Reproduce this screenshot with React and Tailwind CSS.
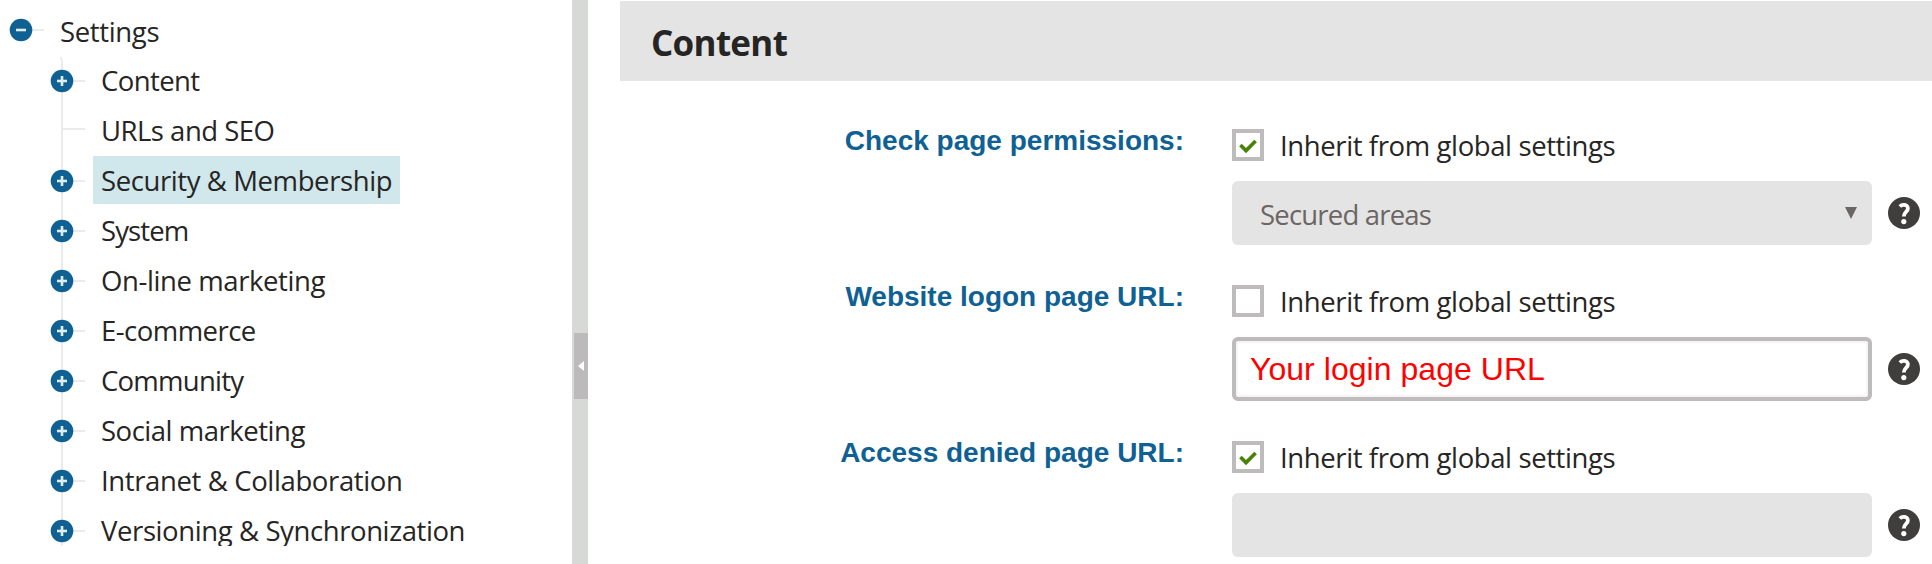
import React from "react";

const TREE = [
  { label: "Content", tracking: "tracking-[-0.6px]", first: true },
  { label: "URLs and SEO", tracking: "tracking-[-0.5px]", leaf: true },
  { label: "Security & Membership", tracking: "tracking-[-0.4px]", selected: true },
  { label: "System", tracking: "tracking-[-0.9px]" },
  { label: "On-line marketing", tracking: "tracking-[-0.4px]" },
  { label: "E-commerce", tracking: "tracking-[-0.53px]" },
  { label: "Community", tracking: "tracking-[-0.75px]" },
  { label: "Social marketing", tracking: "tracking-[-0.48px]" },
  { label: "Intranet & Collaboration", tracking: "tracking-[-0.37px]" },
  { label: "Versioning & Synchronization", tracking: "tracking-[-0.4px]" },
];

function NodeIcon({ root, first, leaf }) {
  const cy = root ? 23 : 25;
  return (
    <svg width="36" height="50" viewBox="0 0 36 50" className="block shrink-0">
      {!root && <rect x="11" y={first ? 4 : 0} width="2" height={first ? 46 : 50} fill="#ebebeb" />}
      {first && <rect x="10" y="1" width="2" height="3" fill="#ebebeb" />}
      <rect x="12" y={leaf ? 22 : cy - 1} width="23" height="2" fill="#ebebeb" />
      {!leaf && (
        <>
          <circle cx="12" cy={cy} r="11.3" fill="#0f6194" />
          <rect x="7" y={cy - 1.3} width="10" height="2.6" fill="#e0ebf2" />
          {!root && <rect x="10.7" y={cy - 5} width="2.6" height="10" fill="#e0ebf2" />}
        </>
      )}
    </svg>
  );
}

function Sidebar() {
  return (
    <nav className="w-[572px] h-[546px] shrink-0 overflow-hidden pt-[7px] text-[27.5px] leading-[50px] text-[#262524] whitespace-nowrap">
      <div className="flex h-[49px] pl-[9px]">
        <NodeIcon root />
        <span className="ml-[15px] tracking-[-0.35px]">Settings</span>
      </div>
      <ul className="pl-[50px]">
        {TREE.map((n) => (
          <li key={n.label} className="flex h-[50px]">
            <NodeIcon first={n.first} leaf={n.leaf} />
            <span className={`ml-[7px] h-12 px-2 ${n.tracking} ${n.selected ? "w-[307px] bg-[#d0e7ec]" : ""}`}>
              {n.label}
            </span>
          </li>
        ))}
      </ul>
    </nav>
  );
}

function Splitter() {
  return (
    <div className="flex w-4 shrink-0 flex-col items-end bg-[#d6d9d6] pt-[333px]">
      <div className="flex h-[66px] w-[14px] items-center bg-[#bdbabb] pl-1">
        <svg width="6" height="10" viewBox="0 0 6 10">
          <path d="M6 0V10L0 5Z" fill="#fff" />
        </svg>
      </div>
    </div>
  );
}

function HelpIcon() {
  return (
    <svg width="32" height="32" viewBox="0 0 32 32" className="ml-4 shrink-0">
      <circle cx="16" cy="16" r="16" fill="#403e3d" />
      <path
        d="M11.8 9.5C13.2 8.1 15 7.6 16.7 7.9C19.3 8.3 20.5 10.6 19.6 12.8C18.8 14.9 15.8 15.6 15.8 19.6"
        fill="none"
        stroke="#fff"
        strokeWidth="3.8"
      />
      <circle cx="15.8" cy="24.6" r="2.6" fill="#fff" />
    </svg>
  );
}

function Setting({ label, checked, children }) {
  return (
    <div className="flex h-[121px]">
      <div className="w-[596px] shrink-0 pt-px text-right font-['Liberation_Sans',sans-serif] text-[28px] leading-8 font-bold text-[#0f6194]">
        {label}
      </div>
      <div className="ml-12 pt-[5px]">
        <div className="flex h-8">
          <span className="flex size-8 items-center justify-center border-4 border-[#bdbbbb]">
            {checked && (
              <svg width="24" height="24" viewBox="0 0 24 24">
                <path d="M4.4 12L10 17.6L19.6 8" fill="none" stroke="#498205" strokeWidth="3.6" />
              </svg>
            )}
          </span>
          <span className="ml-4 text-[27.5px] leading-[34px] tracking-[-0.39px] text-[#262524]">
            Inherit from global settings
          </span>
        </div>
        <div className="mt-5 flex items-center">
          {children}
          <HelpIcon />
        </div>
      </div>
    </div>
  );
}

export default function App() {
  return (
    <div className="flex h-[564px] w-[1932px] overflow-hidden bg-white font-['Open_Sans','Noto_Sans',sans-serif]">
      <Sidebar />
      <Splitter />
      <main className="min-w-0 flex-1 whitespace-nowrap pt-px">
        <h2 className="ml-8 h-20 bg-[#e4e4e4] pt-0.5 pl-[31px] text-[35px] leading-[80px] font-bold tracking-[-0.7px] text-[#262524]">
          Content
        </h2>
        <div className="mt-[43px] flex flex-col gap-[35px]">
          <Setting label="Check page permissions:" checked>
            <div className="flex h-16 w-[640px] items-center justify-between rounded-md bg-[#e4e4e4] pr-[15px] pl-7 text-[27.5px] text-[#6b6663]">
              <span className="pt-1 leading-[60px] tracking-[-0.8px]">Secured areas</span>
              <svg width="12" height="12" viewBox="0 0 12 12">
                <path d="M0 0H12L6 12Z" fill="#6b6663" />
              </svg>
            </div>
          </Setting>
          <Setting label="Website logon page URL:">
            <div className="h-16 w-[640px] rounded-md border-4 border-[#bdbbbb] bg-white pl-[14px] font-['Liberation_Sans',sans-serif] text-[32px] leading-[56px] tracking-[0.04px] text-[#ff0000] shadow-[inset_0_0_0_2px_#f5f5f5]">
              Your login page URL
            </div>
          </Setting>
          <Setting label="Access denied page URL:" checked>
            <div className="h-16 w-[640px] rounded-md bg-[#e4e4e4]" />
          </Setting>
        </div>
      </main>
    </div>
  );
}
